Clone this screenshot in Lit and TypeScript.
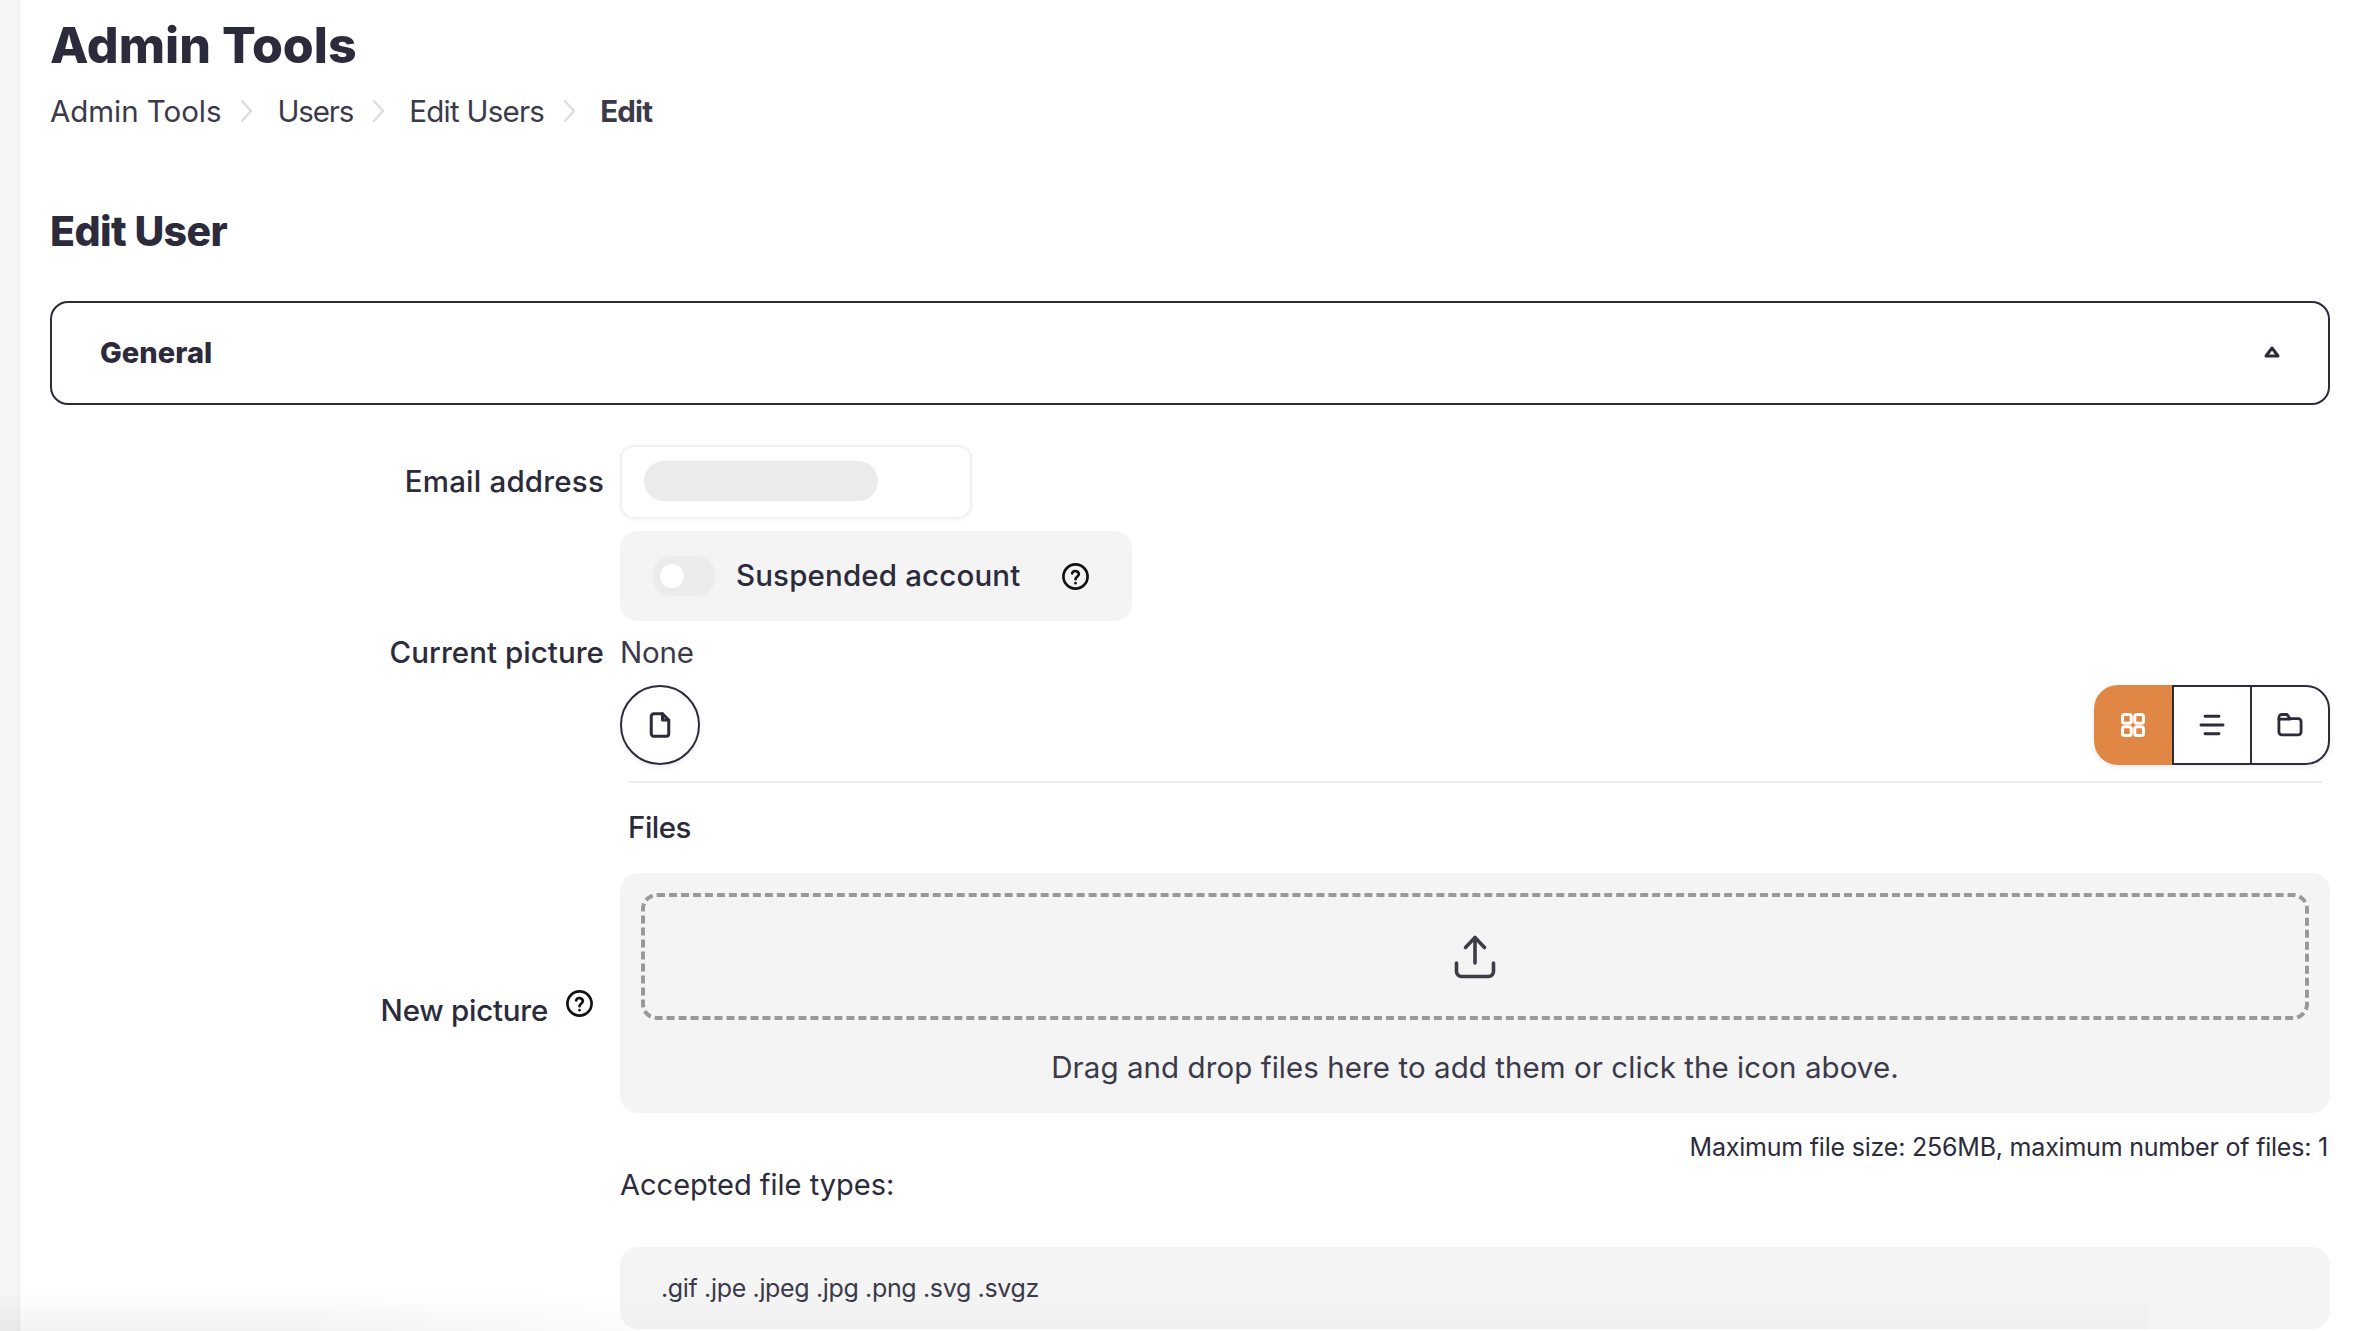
import { LitElement, html, css } from "lit";
import { customElement } from "lit/decorators.js";

const help = (cls: string) => html`<svg class="help ${cls}" viewBox="0 0 24 24" fill="none" stroke="currentColor" stroke-width="2.2" stroke-linecap="round" stroke-linejoin="round"><circle cx="12" cy="12" r="10"/><path d="M9.2 9.4a2.9 2.9 0 0 1 5.6 .6c0 2-2.8 2.4-2.8 4.2"/><path d="M12 17.4v.1"/></svg>`;

@customElement("app-root")
export class AppRoot extends LitElement {
  static styles = css`
    :host { display: flex; width: 100%; height: 1331px; overflow: hidden; position: relative; background: #fff; color: #2b2b3b; font-family: Inter, "Noto Sans", sans-serif; }
    * { box-sizing: border-box; }
    .side { width: 20px; flex: none; background: #f6f6f6; border-right: 2px solid #f1f1f1; }
    .main { flex: 1; min-width: 0; padding: 15px 43px 0 30px; }
    h1 { margin: 0; font-size: 50px; line-height: 60px; font-weight: 800; letter-spacing: 0; }
    .crumbs { display: flex; align-items: center; margin-top: 16px; height: 40px; font-size: 29.5px; color: #3a3a4a; letter-spacing: -0.05px; }
    .crumbs b { font-weight: 700; letter-spacing: -0.8px; }
    .crumbs .u { letter-spacing: -1.1px; }
    .crumbs .e { letter-spacing: -0.75px; }
    .crumbs svg { width: 16px; height: 26px; margin: 0 22px 0 18px; color: #dcdce4; flex: none; }
    h2 { margin: 70px 0 0; font-size: 41px; line-height: 60px; font-weight: 800; letter-spacing: -0.6px; }
    .card { margin-top: 40px; height: 104px; border: 2.5px solid #2b2b3b; border-radius: 18px; display: flex; align-items: center; justify-content: space-between; padding: 0 48px; font-size: 29px; font-weight: 800; letter-spacing: 0.05px; }
    .card span { margin-top: -2px; }
    .card svg { width: 18px; height: 14px; margin: -2px -1px 0 0; }
    .form { display: grid; grid-template-columns: 570px 1fr; margin-top: 40px; }
    .lbl { justify-self: end; padding-right: 16px; font-size: 29.5px; font-weight: 500; line-height: 40px; letter-spacing: 0.15px; color: #2b2b3b; }
    .email { align-self: center; padding-bottom: 2px; line-height: 38px; letter-spacing: 0.2px; }
    .input { width: 352px; height: 74px; background: #fff; border: 2px solid #f1f1f1; border-radius: 14px; box-shadow: 0 1px 6px rgba(0,0,0,.04); padding: 14px 22px; }
    .pill { width: 234px; height: 40px; border-radius: 20px; background: #ebebeb; }
    .toggle { grid-column: 2; margin-top: 12px; width: 512px; height: 90px; background: #f4f4f4; border-radius: 18px; display: flex; align-items: center; padding-left: 32px; }
    .sw { width: 64px; height: 40px; border-radius: 20px; background: #ececec; display: flex; align-items: center; padding-left: 8px; flex: none; }
    .sw i { width: 24px; height: 24px; border-radius: 50%; background: #fff; display: block; }
    .toggle span { margin-left: 20px; width: 325px; flex: none; font-size: 29.5px; font-weight: 500; line-height: 40px; padding-bottom: 2px; letter-spacing: 0.15px; }
    .help { display: block; color: #111; flex: none; }
    .h28 { width: 29px; height: 29px; }
    .cur { margin-top: 11px; letter-spacing: 0.05px; }
    .none { margin-top: 11px; font-size: 29.5px; line-height: 40px; color: #3a3a4a; letter-spacing: -0.2px; }
    .np { align-self: center; margin-top: 18px; display: flex; align-items: flex-start; padding-right: 26px; gap: 17px; letter-spacing: -0.25px; }
    .np svg { margin-top: -1px; }
    .picker { margin-top: 13px; min-width: 0; }
    .bar { display: flex; justify-content: space-between; height: 80px; }
    .circle { width: 80px; height: 80px; border: 2px solid #2b2b3b; border-radius: 50%; display: flex; align-items: center; justify-content: center; box-shadow: 0 2px 6px rgba(0,0,0,.08); }
    .ico { width: 28px; height: 28px; display: block; }
    .file { width: 30px; height: 30px; }
    .group { display: flex; width: 236px; height: 80px; border-radius: 24px; box-shadow: 0 2px 6px rgba(0,0,0,.08); }
    .btn { flex: 1; display: flex; align-items: center; justify-content: center; border: solid #2b2b3b; border-width: 2px 0 2px 2px; }
    .btn.on { background: #e08745; color: #fff; border: none; border-radius: 24px 0 0 24px; flex: none; width: 78px; }
    .btn.end { border-right-width: 2px; border-radius: 0 24px 24px 0; }
    .rule { margin: 16px 8px 0 8px; height: 2px; background: #eeeeee; }
    .files { margin: 24px 0 0 8px; font-size: 29.5px; font-weight: 500; line-height: 40px; letter-spacing: -0.5px; }
    .drop { margin-top: 26px; height: 240px; background: #f4f4f4; border-radius: 18px; padding: 20px 21px 0; text-align: center; }
    .dash { height: 127px; border: 4px dashed #999; border-radius: 16px; display: flex; align-items: center; justify-content: center; }
    .up { width: 50px; height: 50px; color: #3d3d48; }
    .drop p { margin: 27px 0 0; font-size: 29.5px; line-height: 40px; color: #3a3a4a; letter-spacing: 0.07px; }
    .max { margin-top: 17px; text-align: right; font-size: 25px; line-height: 34px; color: #2b2b3b; padding-right: 2px; letter-spacing: -0.21px; }
    .acc { margin-top: 1px; font-size: 29px; line-height: 40px; color: #2b2b3b; letter-spacing: 0; }
    .types { margin-top: 42px; height: 82px; background: #f4f4f4; border-radius: 18px; display: flex; align-items: center; padding-left: 41px; font-size: 25px; color: #3a3a4a; letter-spacing: -0.35px; }
    .shade { position: absolute; left: 0; bottom: 0; width: 2148px; height: 40px; background: linear-gradient(to bottom, rgba(0,0,0,0), rgba(0,0,0,.05)); pointer-events: none; -webkit-mask-image: linear-gradient(to right, #000 0, #000 300px, rgba(0,0,0,.3) 640px, rgba(0,0,0,.3) 2148px); }
  `;

  private chev() {
    return html`<svg viewBox="0 0 16 26" fill="none" stroke="currentColor" stroke-width="2.4" stroke-linecap="round" stroke-linejoin="round"><path d="M3 3l9 10-9 10"/></svg>`;
  }

  render() {
    return html`
      <div class="side"></div>
      <main class="main">
        <h1>Admin Tools</h1>
        <nav class="crumbs"><span>Admin Tools</span>${this.chev()}<span class="u">Users</span>${this.chev()}<span class="e">Edit Users</span>${this.chev()}<b>Edit</b></nav>
        <h2>Edit User</h2>
        <section class="card"><span>General</span>
          <svg viewBox="0 0 18 14" fill="none" stroke="currentColor" stroke-width="3" stroke-linejoin="round"><path d="M9 3L3 11h12z"/></svg>
        </section>
        <div class="form">
          <label class="lbl email">Email address</label>
          <div class="input"><div class="pill"></div></div>
          <div class="toggle"><div class="sw"><i></i></div><span>Suspended account</span>${help("h28")}</div>
          <label class="lbl cur">Current picture</label>
          <div class="none">None</div>
          <label class="lbl np"><span>New picture</span>${help("h28")}</label>
          <div class="picker">
            <div class="bar">
              <div class="circle"><svg class="ico file" viewBox="0 0 24 24" fill="none" stroke="currentColor" stroke-width="2.4" stroke-linecap="round" stroke-linejoin="round"><path d="M14 3v5h5"/><path d="M17 21H7a2 2 0 0 1-2-2V5a2 2 0 0 1 2-2h7l5 5v11a2 2 0 0 1-2 2z"/></svg></div>
              <div class="group">
                <div class="btn on"><svg class="ico" viewBox="0 0 24 24" fill="none" stroke="currentColor" stroke-width="2.6" stroke-linejoin="round"><rect x="3" y="3" width="7.5" height="7.5" rx="2"/><rect x="13.5" y="3" width="7.5" height="7.5" rx="2"/><rect x="3" y="13.5" width="7.5" height="7.5" rx="2"/><rect x="13.5" y="13.5" width="7.5" height="7.5" rx="2"/></svg></div>
                <div class="btn"><svg class="ico" viewBox="0 0 24 24" fill="none" stroke="currentColor" stroke-width="2.4" stroke-linecap="round"><path d="M6 4.5h12M2.5 12h19M6 19.5h12"/></svg></div>
                <div class="btn end"><svg class="ico" viewBox="0 0 24 24" fill="none" stroke="currentColor" stroke-width="2.4" stroke-linecap="round" stroke-linejoin="round"><path d="M5 3h4.5l2.5 3.5h7a2.5 2.5 0 0 1 2.5 2.5v9a2.5 2.5 0 0 1-2.5 2.5H5A2.5 2.5 0 0 1 2.5 18V5.5A2.5 2.5 0 0 1 5 3z"/><path d="M2.5 7h9.5"/></svg></div>
              </div>
            </div>
            <div class="rule"></div>
            <div class="files">Files</div>
            <div class="drop">
              <div class="dash"><svg class="up" viewBox="0 0 50 50" fill="none" stroke="currentColor" stroke-width="3.6" stroke-linecap="round" stroke-linejoin="round"><path d="M25 31V6"/><path d="M15.5 15.5L25 5.5l9.5 10"/><path d="M6.5 31v8.5a5 5 0 0 0 5 5h27a5 5 0 0 0 5-5V31"/></svg></div>
              <p>Drag and drop files here to add them or click the icon above.</p>
            </div>
            <div class="max">Maximum file size: 256MB, maximum number of files: 1</div>
            <div class="acc">Accepted file types:</div>
            <div class="types">.gif .jpe .jpeg .jpg .png .svg .svgz</div>
          </div>
        </div>
      </main>
      <div class="shade"></div>
    `;
  }
}
